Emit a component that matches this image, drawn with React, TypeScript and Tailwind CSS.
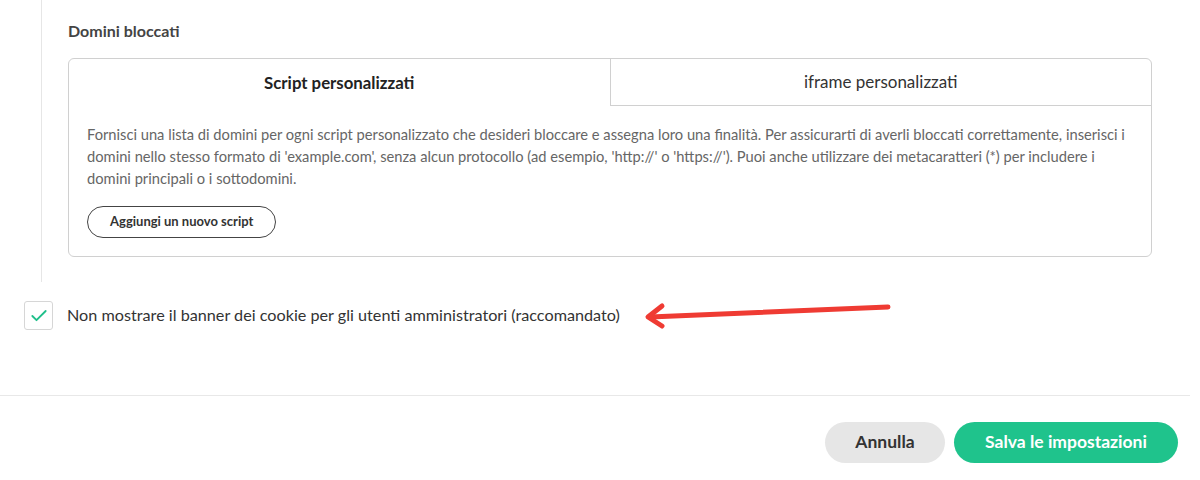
import { Check } from 'lucide-react';

export default function App() {
  return (
    <div className="relative w-[1200px] h-[480px] bg-white overflow-hidden font-['Lato',sans-serif] text-[#333]">
      <div className="ml-[41px] border-l border-[#e6e6e6] pl-[26px] pr-[48px] pt-[21px] pb-[25px]">
        <h3 className="text-[16px] font-bold text-[#444] leading-[20px]">Domini bloccati</h3>
        <div className="mt-[17px] border border-[#d0d0d0] rounded-[6px]">
          <div className="flex">
            <div className="flex-1 h-[47px] flex items-center justify-center text-[16.8px] font-bold text-[#222]">
              Script personalizzati
            </div>
            <div className="flex-1 h-[47px] flex items-center justify-center text-[17px] text-[#333] border-l border-b border-[#d0d0d0]">
              iframe personalizzati
            </div>
          </div>
          <div className="px-[18px] pt-[17px] pb-[18px]">
            <p className="text-[14.7px] leading-[22px] text-[#666]">
              Fornisci una lista di domini per ogni script personalizzato che desideri bloccare e assegna loro una finalità. Per assicurarti di averli bloccati correttamente, inserisci i domini nello stesso formato di 'example.com', senza alcun protocollo (ad esempio, 'http://' o 'https://'). Puoi anche utilizzare dei metacaratteri (*) per includere i domini principali o i sottodomini.
            </p>
            <button className="mt-[17px] h-[32px] px-[22px] rounded-full border border-[#444] text-[13px] font-bold text-[#333]">
              Aggiungi un nuovo script
            </button>
          </div>
        </div>
      </div>

      <div className="flex items-center gap-[14px] pl-[24px] mt-[19px]">
        <div className="w-[29px] h-[29px] rounded-[3px] border border-[#d6d6d6] flex items-center justify-center">
          <Check className="w-[20px] h-[20px] text-[#1fbf8a]" strokeWidth={2.2} />
        </div>
        <span className="text-[16.2px] text-[#333]">
          Non mostrare il banner dei cookie per gli utenti amministratori (raccomandato)
        </span>
      </div>

      <div className="mt-[65px] mr-[10px] border-t border-[#e8e8e8]" />

      <div className="flex justify-end gap-[9px] pr-[22px] pt-[26px]">
        <button className="h-[41px] w-[120px] rounded-full bg-[#e6e6e6] text-[17.5px] font-bold text-[#333]">
          Annulla
        </button>
        <button className="h-[41px] w-[224px] rounded-full bg-[#1fc38c] text-[17.5px] font-bold text-white">
          Salva le impostazioni
        </button>
      </div>

      <svg className="absolute left-[640px] top-[296px]" width="260" height="36" viewBox="0 0 260 36">
        <path d="M248 11 L10 21" stroke="#ef3b33" strokeWidth="5" strokeLinecap="round" fill="none" />
        <path d="M22 10 L8 21 L22 30" stroke="#ef3b33" strokeWidth="5" strokeLinecap="round" strokeLinejoin="round" fill="none" />
      </svg>
    </div>
  );
}
